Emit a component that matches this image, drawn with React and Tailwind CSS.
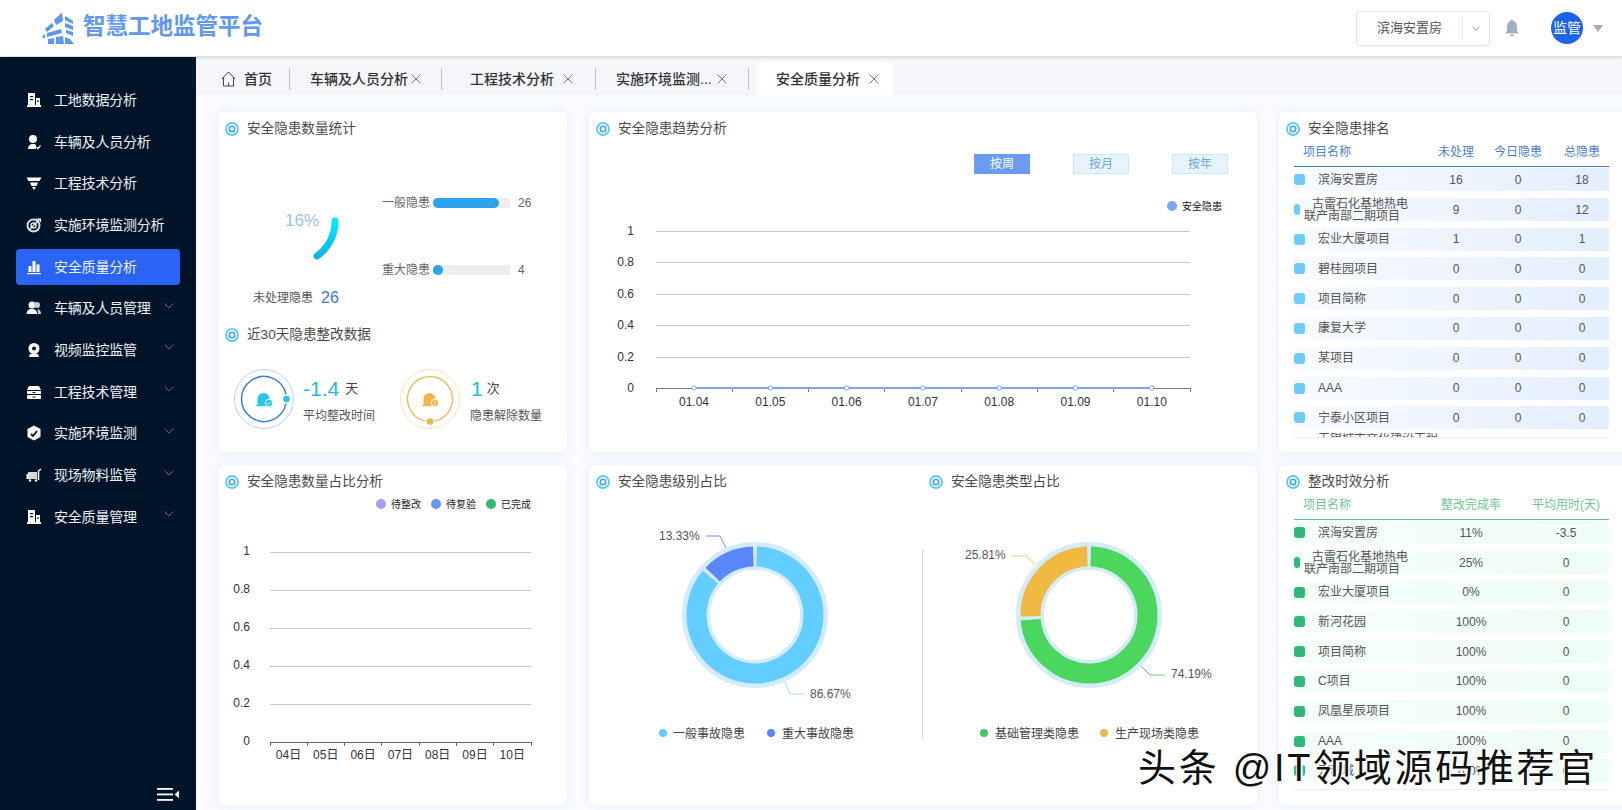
import React from 'react'

const navItems = [
  { label: '工地数据分析', icon: 'building' },
  { label: '车辆及人员分析', icon: 'person' },
  { label: '工程技术分析', icon: 'funnel' },
  { label: '实施环境监测分析', icon: 'target' },
  { label: '安全质量分析', icon: 'bars', active: true },
  { label: '车辆及人员管理', icon: 'people', more: true },
  { label: '视频监控监管', icon: 'camera', more: true },
  { label: '工程技术管理', icon: 'drawer', more: true },
  { label: '实施环境监测', icon: 'shield', more: true },
  { label: '现场物料监管', icon: 'cart', more: true },
  { label: '安全质量管理', icon: 'building', more: true },
]

const rankRows = [
  ['滨海安置房', 16, 0, 18],
  ['古雷石化基地热电联产南部二期项目', 9, 0, 12, true],
  ['宏业大厦项目', 1, 0, 1],
  ['碧桂园项目', 0, 0, 0],
  ['项目简称', 0, 0, 0],
  ['康复大学', 0, 0, 0],
  ['某项目', 0, 0, 0],
  ['AAA', 0, 0, 0],
  ['宁泰小区项目', 0, 0, 0],
]

const effectRows = [
  ['滨海安置房', '11%', '-3.5'],
  ['古雷石化基地热电联产南部二期项目', '25%', '0', true],
  ['宏业大厦项目', '0%', '0'],
  ['新河花园', '100%', '0'],
  ['项目简称', '100%', '0'],
  ['C项目', '100%', '0'],
  ['凤凰星辰项目', '100%', '0'],
  ['AAA', '100%', '0'],
  ['万科城', '100%', '0'],
]

function polar(cx, cy, r, deg) {
  const a = ((deg - 90) * Math.PI) / 180
  return [cx + r * Math.cos(a), cy + r * Math.sin(a)]
}

function arc(cx, cy, r, from, to) {
  const [x1, y1] = polar(cx, cy, r, from)
  const [x2, y2] = polar(cx, cy, r, to)
  const large = to - from > 180 ? 1 : 0
  return `M${x1} ${y1}A${r} ${r} 0 ${large} 1 ${x2} ${y2}`
}

function NavIcon({ name }) {
  const dark = '#001429'
  return (
    <svg width="16" height="16" viewBox="0 0 16 16" fill="#fff" className="shrink-0">
      {name === 'building' && (
        <>
          <rect x="2" y="1" width="7" height="12" />
          <rect x="10" y="6" width="4" height="7" />
          <rect x="1" y="13" width="14" height="2" />
          <rect x="4" y="4" width="3" height="1.2" fill={dark} />
          <rect x="4" y="7" width="3" height="1.2" fill={dark} />
          <rect x="11" y="8.5" width="2" height="1.2" fill={dark} />
        </>
      )}
      {name === 'person' && (
        <>
          <circle cx="7" cy="5" r="4" />
          <path d="M2 15c0-3 2-5 5-5 1.500 0 2.500.5 3 1v4z" />
          <path d="M10.500 13l1.500 1.500 2.500-3" fill="none" stroke="#fff" strokeWidth="1.200" />
        </>
      )}
      {name === 'funnel' && (
        <>
          <polygon points="0.500,2.500 15.500,2.500 13.500,6 2.500,6" />
          <polygon points="4,7.500 12,7.500 10.500,11 5.500,11" />
          <polygon points="6,12 10,12 8,15" />
        </>
      )}
      {name === 'target' && (
        <>
          <circle cx="7.500" cy="8.500" r="6" fill="none" stroke="#d8dde3" strokeWidth="2" />
          <circle cx="7.500" cy="8.500" r="2.500" fill="none" stroke="#d8dde3" strokeWidth="1.500" />
          <path d="M3 13L14 2M10 2h4.500v3" fill="none" stroke="#fff" strokeWidth="1.200" />
        </>
      )}
      {name === 'bars' && (
        <>
          <rect x="2.500" y="7" width="3" height="6" />
          <rect x="6.500" y="2" width="3" height="11" />
          <rect x="10.500" y="5.500" width="3" height="7.500" />
          <rect x="1" y="14" width="14" height="1.200" />
        </>
      )}
      {name === 'people' && (
        <>
          <circle cx="6" cy="5" r="3.500" />
          <path d="M0.500 14c0-3 2-5 5.500-5s5 2 5 5z" />
          <circle cx="11" cy="5" r="3" fill="#c8ced6" />
          <path d="M11.500 9c2 .3 3.500 2 3.500 5h-3z" fill="#c8ced6" />
        </>
      )}
      {name === 'camera' && (
        <>
          <circle cx="8" cy="6.500" r="5.500" />
          <circle cx="8" cy="6.500" r="2" fill={dark} />
          <path d="M4 12h8l1 3H3z" />
        </>
      )}
      {name === 'drawer' && (
        <>
          <path d="M3 2h10l2 4H1z" />
          <rect x="1" y="7" width="14" height="3" />
          <rect x="1" y="11" width="14" height="4" rx="1" />
          <rect x="6.500" y="8" width="3" height="1" fill={dark} />
          <rect x="6.500" y="12.500" width="3" height="1" fill={dark} />
        </>
      )}
      {name === 'shield' && (
        <>
          <polygon points="8,0.500 14.500,4 14.500,12 8,15.500 1.500,12 1.500,4" />
          <path d="M5 9l2 2 4-5" fill="none" stroke={dark} strokeWidth="1.800" />
        </>
      )}
      {name === 'cart' && (
        <>
          <rect x="2" y="5" width="9" height="7" fill="#d4d9df" />
          <rect x="0.500" y="7" width="2" height="5" />
          <path d="M12.500 13V4l2.500-2" fill="none" stroke="#fff" strokeWidth="1.500" />
          <circle cx="4" cy="13.500" r="1.200" />
          <circle cx="10" cy="13.500" r="1.200" />
        </>
      )}
    </svg>
  )
}

function TitleIcon() {
  return (
    <svg width="14" height="14" viewBox="0 0 14 14" className="shrink-0">
      <circle cx="7" cy="7" r="6" fill="none" stroke="#5ccbef" strokeWidth="1.800" />
      <circle cx="7" cy="7" r="2.700" fill="none" stroke="#3fa2e4" strokeWidth="1.600" />
    </svg>
  )
}

function CardTitle({ text, className }) {
  return (
    <div className={'h-[34px] flex items-center gap-2 pl-[7px] text-[13.6px] text-[#4a4a4a] ' + (className || '')}>
      <TitleIcon />
      <span>{text}</span>
    </div>
  )
}

function Close() {
  return (
    <svg width="10" height="10" viewBox="0 0 10 10" className="shrink-0">
      <path d="M0.500 0.500l9 9M9.500 0.500l-9 9" stroke="#666" strokeWidth="0.900" />
    </svg>
  )
}

function Tabs() {
  return (
    <div className="h-[38px] bg-[#f5f6fa] flex items-end shrink-0 text-sm font-medium text-[#333]">
      <div className="w-[94px] h-[33px] flex items-center">
        <div className="w-full h-[22px] border-r border-[#b9bec5] flex items-center pl-[25px] gap-2">
          <svg width="15" height="16" viewBox="0 0 15 16" fill="none" stroke="#444" strokeWidth="1">
            <path d="M0.800 8L7.500 1l6.700 7M2.500 6.500V15h10V6.500M7.500 11.500V15" />
          </svg>
          <span>首页</span>
        </div>
      </div>
      <div className="w-[152px] h-[33px] flex items-center">
        <div className="w-full h-[22px] border-r border-[#b9bec5] flex items-center pl-[20px] gap-[3px]">
          <span>车辆及人员分析</span>
          <Close />
        </div>
      </div>
      <div className="w-[154px] h-[33px] flex items-center">
        <div className="w-full h-[22px] border-r border-[#b9bec5] flex items-center pl-[28px] gap-[9px]">
          <span>工程技术分析</span>
          <Close />
        </div>
      </div>
      <div className="w-[153px] h-[33px] flex items-center">
        <div className="w-full h-[22px] border-r border-[#b9bec5] flex items-center pl-[20px] gap-[5px]">
          <span>实施环境监测...</span>
          <Close />
        </div>
      </div>
      <div className="ml-[7px] w-[137px] h-[33px] bg-white rounded-t-md flex items-center pl-[20px] gap-[9px]">
        <span>安全质量分析</span>
        <Close />
      </div>
    </div>
  )
}

function Header() {
  return (
    <div className="h-[57px] shrink-0 bg-white border-b border-[#dcdfe4] flex items-center pl-[42px] pr-[19px] relative z-10 shadow-[0_1px_3px_rgba(0,0,0,0.12)]">
      <svg width="33" height="33" viewBox="0 0 33 33" fill="#5b97ee" className="shrink-0">
        <polygon points="12,8 20,0.500 21,9 14,13" />
        <polygon points="3,17 10,11 12,14 5,20" />
        <polygon points="23,4 31,9 31,12 23,8" />
        <polygon points="23,11 31,14 31,18 23,15" />
        <polygon points="24,18 31,20 31,24 24,21" />
        <polygon points="5,21 19,17 20,21 5,25" />
        <polygon points="6,27 12,26 12,32 6,32" />
        <polygon points="14,25 21,24 22,32 14,32" />
        <polygon points="23,25 28,27 32,32 23,32" />
        <polygon points="0.500,24 3,22 3,26 0.500,26" />
      </svg>
      <div className="ml-2 text-[22.5px] font-bold text-[#5f98ec] leading-none -mt-[2px]">智慧工地监管平台</div>
      <div className="ml-auto w-[134px] h-[35px] border border-[#dfe3e8] rounded flex items-center text-xs text-[#555] shadow-[0_1px_2px_rgba(0,0,0,0.05)]">
        <span className="pl-5 text-[13px]">滨海安置房</span>
        <span className="ml-auto h-[22px] border-l border-[#e6e8eb]" />
        <svg width="8" height="5" viewBox="0 0 8 5" className="mx-[9px]">
          <path d="M0.500 0.500L4 4.500l3.500-4" fill="none" stroke="#888" strokeWidth="0.800" />
        </svg>
      </div>
      <svg width="16" height="18" viewBox="0 0 16 18" fill="#a3afbf" className="ml-[14px]">
        <path d="M8 0.500a1.300 1.300 0 0 1 1.300 1.500C11.800 2.700 13 5 13 7.500V12l2 2.500H1L3 12V7.500C3 5 4.200 2.700 6.700 2A1.300 1.300 0 0 1 8 0.500z" />
        <path d="M6 15.500h4a2 2 0 0 1-4 0z" />
      </svg>
      <div className="ml-[31px] w-8 h-8 rounded-full bg-[#1e63e9] text-white text-sm flex items-center justify-center">监管</div>
      <svg width="10" height="7" viewBox="0 0 10 7" fill="#a6aeb8" className="ml-[10px]">
        <polygon points="0,0 10,0 5,7" />
      </svg>
    </div>
  )
}

function Sidebar() {
  return (
    <div className="w-[196px] shrink-0 bg-[#001429] flex flex-col pt-[22px]">
      {navItems.map((item) => (
        <div key={item.label} className="h-[41.7px] flex items-center px-4 shrink-0">
          <div className={'w-full h-9 rounded flex items-center pl-[10px] pr-[6px] gap-3 text-[#eef1f5] ' + (item.active ? 'bg-[#2a64f6]' : '')}>
            <NavIcon name={item.icon} />
            <span className="whitespace-nowrap text-sm tracking-[-0.2px]">{item.label}</span>
            {item.more && (
              <svg width="10" height="6" viewBox="0 0 10 6" className="ml-auto -mt-[5px] shrink-0">
                <path d="M0.500 0.500L5 5l4.500-4.500" fill="none" stroke="#5d6c80" strokeWidth="0.900" />
              </svg>
            )}
          </div>
        </div>
      ))}
      <div className="mt-auto flex justify-end pr-[17px] pb-[9px]">
        <svg width="22" height="13" viewBox="0 0 22 13" fill="#fff">
          <rect x="0" y="0" width="16" height="1.800" />
          <rect x="0" y="5.500" width="16" height="1.800" />
          <rect x="0" y="11" width="16" height="1.800" />
          <polygon points="22,2.500 22,10 17.500,6.400" />
        </svg>
      </div>
    </div>
  )
}

function Bar({ label, value, fillClass }) {
  return (
    <div className="h-5 flex items-center text-xs text-[#666]">
      <span className="w-[51px]">{label}</span>
      <div className="w-[77px] h-[10px] bg-[#eeeeee]">
        <div className={'h-full rounded-full bg-[#2ba3ef] ' + fillClass} />
      </div>
      <span className="ml-2 text-[#666]">{value}</span>
    </div>
  )
}

function Gauge({ color, soft, fill, dotAngle, mark }) {
  const [dx, dy] = polar(31, 31, 22.5, dotAngle)
  return (
    <svg width="62" height="62" viewBox="0 0 62 62" className="shrink-0">
      <circle cx="31" cy="31" r="29.500" fill="none" stroke={soft} strokeWidth="1" />
      <path d={arc(31, 31, 22.5, dotAngle + 12, dotAngle + 348)} fill="none" stroke={color} strokeWidth="1.500" />
      <circle cx={dx} cy={dy} r="3.300" fill={fill} />
      <path d="M24.500 37v-6a6 6 0 0 1 12 0v6z" fill={fill} />
      <rect x="23" y="37" width="14" height="1.200" fill={fill} />
      <circle cx="36" cy="35" r="3.800" fill={fill} stroke="#fff" strokeWidth="1" />
      {mark === 'check' ? (
        <path d="M34 35l1.500 1.500 2.500-3" fill="none" stroke="#fff" strokeWidth="0.900" />
      ) : (
        <path d="M36 33v2.500M36 36.500v0.800" fill="none" stroke="#fff" strokeWidth="0.900" />
      )}
    </svg>
  )
}

function StatsCard() {
  return (
    <div className="bg-white rounded-md shadow-[0_0_8px_rgba(205,222,250,0.55)] overflow-hidden">
      <CardTitle text="安全隐患数量统计" />
      <div className="h-[142px] flex">
        <svg width="164" height="142" viewBox="0 0 164 142" className="shrink-0">
          <defs>
            <linearGradient id="ringGrad" x1="0" y1="0" x2="0" y2="1">
              <stop offset="0" stopColor="#00eaf8" />
              <stop offset="1" stopColor="#09b4ee" />
            </linearGradient>
          </defs>
          <text x="67" y="80" fontSize="17" fontWeight="300" fill="#9dbfe0">16%</text>
          <path d="M117 75A42 42 0 0 1 99 110" fill="none" stroke="url(#ringGrad)" strokeWidth="7" strokeLinecap="round" />
        </svg>
        <div className="flex flex-col">
          <div className="mt-[47px]"><Bar label="一般隐患" value="26" fillClass="w-[66px]" /></div>
          <div className="mt-[47px]"><Bar label="重大隐患" value="4" fillClass="w-[10px]" /></div>
        </div>
      </div>
      <div className="h-5 flex items-center pl-[35px] gap-2 text-xs text-[#555]">
        <span>未处理隐患</span>
        <span className="text-base text-[#3f78c4]">26</span>
      </div>
      <CardTitle text="近30天隐患整改数据" className="mt-[10px]" />
      <div className="flex pl-[15px] mt-[16px]">
        <div className="w-[166px] flex items-center gap-2">
          <Gauge color="#3f7fc4" soft="#bcd6ee" fill="#22c6ee" dotAngle={90} mark="check" />
          <div className="flex flex-col">
            <div className="h-[26px] mt-[1px] flex items-center gap-[6px] text-[#29b6e6] text-[21px] leading-none">
              -1.4<span className="text-[13px] text-[#444]">天</span>
            </div>
            <span className="mt-[6px] text-xs text-[#555]">平均整改时间</span>
          </div>
        </div>
        <div className="flex items-center gap-[11px]">
          <Gauge color="#e8bf62" soft="#f6e6c6" fill="#efb550" dotAngle={180} mark="info" />
          <div className="flex flex-col">
            <div className="h-[26px] mt-[1px] -ml-[1px] flex items-center gap-[4px] text-[#29b6e6] text-[21px] leading-none">
              1<span className="text-[13px] text-[#444]">次</span>
            </div>
            <span className="mt-[6px] -ml-[2px] text-xs text-[#555]">隐患解除数量</span>
          </div>
        </div>
      </div>
    </div>
  )
}

function TrendCard() {
  const ys = [57, 88, 120, 151, 183]
  const labels = ['1', '0.8', '0.6', '0.4', '0.2']
  const cats = ['01.04', '01.05', '01.06', '01.07', '01.08', '01.09', '01.10']
  return (
    <div className="bg-white rounded-md shadow-[0_0_8px_rgba(205,222,250,0.55)] overflow-hidden">
      <CardTitle text="安全隐患趋势分析" />
      <div className="mt-2 flex justify-end gap-[43px] pr-[29px] text-xs">
        <div className="w-14 h-5 bg-[#6b9cf0] text-white flex items-center justify-center">按周</div>
        <div className="w-14 h-5 bg-[#e7f3fd] border border-[#cfe5f6] text-[#6fa8dc] flex items-center justify-center">按月</div>
        <div className="w-14 h-5 bg-[#e7f3fd] border border-[#cfe5f6] text-[#6fa8dc] flex items-center justify-center">按年</div>
      </div>
      <svg width="668" height="278" viewBox="0 0 668 278" className="block">
        <circle cx="583" cy="32" r="5" fill="#7ba7ee" />
        <text x="593" y="36" fontSize="10" fill="#111">安全隐患</text>
        {ys.map((y, i) => (
          <g key={y}>
            <line x1="67" x2="601" y1={y} y2={y} stroke="#c8c8c8" shapeRendering="crispEdges" />
            <text x="45" y={y + 4} fontSize="12" fill="#333" textAnchor="end">{labels[i]}</text>
          </g>
        ))}
        <text x="45" y="218" fontSize="12" fill="#333" textAnchor="end">0</text>
        <line x1="67" x2="601" y1="214" y2="214" stroke="#777" shapeRendering="crispEdges" />
        {[0, 1, 2, 3, 4, 5, 6, 7].map((i) => (
          <line key={i} x1={67 + i * 76.3} x2={67 + i * 76.3} y1="214" y2="218" stroke="#777" shapeRendering="crispEdges" />
        ))}
        <line x1="105" x2="563" y1="214" y2="214" stroke="#7ba7ee" strokeWidth="2" />
        {cats.map((c, i) => (
          <g key={c}>
            <circle cx={105 + i * 76.3} cy="214" r="2.200" fill="#fff" stroke="#7ba7ee" />
            <text x={105 + i * 76.3} y="232" fontSize="12" fill="#333" textAnchor="middle">{c}</text>
          </g>
        ))}
      </svg>
    </div>
  )
}

function ShareCard() {
  const ys = [53, 91, 129, 167, 205]
  const labels = ['1', '0.8', '0.6', '0.4', '0.2']
  const days = ['04日', '05日', '06日', '07日', '08日', '09日', '10日']
  return (
    <div className="bg-white rounded-md shadow-[0_0_8px_rgba(205,222,250,0.55)] overflow-hidden">
      <CardTitle text="安全隐患数量占比分析" />
      <svg width="349" height="306" viewBox="0 0 349 306" className="block">
        <circle cx="163" cy="5" r="5" fill="#a79df5" />
        <text x="173" y="9" fontSize="10" fill="#222">待整改</text>
        <circle cx="218" cy="5" r="5" fill="#6598f0" />
        <text x="228" y="9" fontSize="10" fill="#222">待复验</text>
        <circle cx="273" cy="5" r="5" fill="#2fb878" />
        <text x="283" y="9" fontSize="10" fill="#222">已完成</text>
        {ys.map((y, i) => (
          <g key={y}>
            <line x1="52" x2="313" y1={y} y2={y} stroke="#c8c8c8" shapeRendering="crispEdges" />
            <text x="32" y={y + 3} fontSize="12" fill="#333" textAnchor="end">{labels[i]}</text>
          </g>
        ))}
        <text x="32" y="246" fontSize="12" fill="#333" textAnchor="end">0</text>
        <line x1="52" x2="313" y1="243" y2="243" stroke="#666" shapeRendering="crispEdges" />
        {[0, 1, 2, 3, 4, 5, 6, 7].map((i) => (
          <line key={i} x1={52 + i * 37.3} x2={52 + i * 37.3} y1="243" y2="247" stroke="#666" shapeRendering="crispEdges" />
        ))}
        {days.map((d, i) => (
          <text key={d} x={70.500 + i * 37.3} y="260" fontSize="12" fill="#333" textAnchor="middle">{d}</text>
        ))}
      </svg>
    </div>
  )
}

function Donut({ cx, cy, first, colorA, colorB }) {
  const split = first * 3.6
  return (
    <g fill="none">
      <circle cx={cx} cy={cy} r="59" stroke="#d4ebfb" strokeWidth="28" />
      <path d={arc(cx, cy, 58.5, 1.7, split - 1.7)} stroke={colorA} strokeWidth="20" />
      <path d={arc(cx, cy, 58.5, split + 1.7, 358.3)} stroke={colorB} strokeWidth="20" />
    </g>
  )
}

function LevelCard() {
  return (
    <div className="bg-white rounded-md shadow-[0_0_8px_rgba(205,222,250,0.55)] overflow-hidden">
      <div className="flex">
        <CardTitle text="安全隐患级别占比" className="w-[333px]" />
        <CardTitle text="安全隐患类型占比" />
      </div>
      <svg width="668" height="306" viewBox="0 0 668 306" className="block">
        <Donut cx={166} cy={116} first={86.67} colorA="#62cdff" colorB="#5b87fb" />
        <Donut cx={500} cy={116} first={74.19} colorA="#4bd65d" colorB="#efb942" />
        <polyline points="117,37 131,37 137,49" fill="none" stroke="#6b8cf0" />
        <text x="70" y="41" fontSize="12" fill="#555">13.33%</text>
        <polyline points="196,183 201,195 216,195" fill="none" stroke="#a9dcf0" />
        <text x="221" y="199" fontSize="12" fill="#555">86.67%</text>
        <polyline points="423,57 437,57 446,65" fill="none" stroke="#e6c777" />
        <text x="376" y="60" fontSize="12" fill="#555">25.81%</text>
        <polyline points="552,167 561,176 576,176" fill="none" stroke="#6ccb78" />
        <text x="582" y="179" fontSize="12" fill="#555">74.19%</text>
        <line x1="333" x2="333" y1="51" y2="240" stroke="#c9d8e6" shapeRendering="crispEdges" />
        <circle cx="74" cy="234" r="4" fill="#62cdff" />
        <text x="84" y="239" fontSize="12" fill="#444">一般事故隐患</text>
        <circle cx="182" cy="234" r="4" fill="#5b87fb" />
        <text x="193" y="239" fontSize="12" fill="#444">重大事故隐患</text>
        <circle cx="395" cy="234" r="4" fill="#3fc95a" />
        <text x="406" y="239" fontSize="12" fill="#444">基础管理类隐患</text>
        <circle cx="515" cy="234" r="4" fill="#e8b84c" />
        <text x="526" y="239" fontSize="12" fill="#444">生产现场类隐患</text>
      </svg>
    </div>
  )
}

function NameCell({ name, wrap, marker }) {
  return (
    <div className="flex items-center min-w-0">
      <span className={'h-[11px] rounded-[3px] shrink-0 ' + marker + (wrap ? ' w-[6px]' : ' w-[11px]')} />
      {wrap ? (
        <span className="ml-[4px] w-[105px] text-[12px] leading-[12px] indent-[8px]">{name}</span>
      ) : (
        <span className="ml-[13px] whitespace-nowrap">{name}</span>
      )}
    </div>
  )
}

function RankCard() {
  return (
    <div className="bg-white rounded-md shadow-[0_0_8px_rgba(205,222,250,0.55)] overflow-hidden">
      <CardTitle text="安全隐患排名" />
      <div className="pl-[15px] w-[330px] text-xs">
        <div className="h-[23px] -mt-[2px] mb-[1px] grid grid-cols-[137px_50px_74px_54px] text-[#4f7fc9] border-b border-[#4a7ab5] pb-[6px] items-center">
          <span className="pl-[9px]">项目名称</span>
          <span className="text-center">未处理</span>
          <span className="text-center">今日隐患</span>
          <span className="text-center">总隐患</span>
        </div>
        <div className="flex flex-col gap-[6.8px] text-[#555]">
          {rankRows.map((r) => (
            <div key={r[0]} className="h-[23px] grid grid-cols-[137px_50px_74px_54px] items-center bg-linear-to-r from-[#f8fbff] to-[#e3eefe]">
              <NameCell name={r[0]} wrap={r[4]} marker="bg-[#6fcbfa]" />
              <span className="text-center">{r[1]}</span>
              <span className="text-center">{r[2]}</span>
              <span className="text-center">{r[3]}</span>
            </div>
          ))}
        </div>
        <div className="mt-[4px] h-[4px] overflow-hidden leading-[12px] pl-[24px] text-[#555] border-b border-[#eaeef3] box-content">无锡城市文化建设工程</div>
      </div>
    </div>
  )
}

function EffectCard() {
  return (
    <div className="bg-white rounded-md shadow-[0_0_8px_rgba(205,222,250,0.55)] overflow-hidden">
      <CardTitle text="整改时效分析" />
      <div className="pl-[15px] w-[330px] text-xs">
        <div className="h-[23px] -mt-[2px] mb-[1px] grid grid-cols-[137px_80px_98px] text-[#6fc78f] border-b border-[#60c090] pb-[6px] items-center">
          <span className="pl-[9px]">项目名称</span>
          <span className="text-center">整改完成率</span>
          <span className="text-center pl-3">平均用时(天)</span>
        </div>
        <div className="flex flex-col gap-[6.8px] text-[#555] border-b border-[#eaeef3] pb-[7px]">
          {effectRows.map((r) => (
            <div key={r[0]} className="h-[23px] grid grid-cols-[137px_80px_98px] items-center bg-linear-to-r from-[#f5fffa] to-[#eefdf6]">
              <NameCell name={r[0]} wrap={r[3]} marker="bg-[#2fb878]" />
              <span className="text-center">{r[1]}</span>
              <span className="text-center pl-3">{r[2]}</span>
            </div>
          ))}
        </div>
      </div>
    </div>
  )
}

export default function App() {
  return (
    <div className="h-screen w-full overflow-hidden flex flex-col bg-white relative font-['Liberation_Sans','Noto_Sans_CJK_SC',sans-serif]">
      <Header />
      <div className="flex-1 flex min-h-0">
        <Sidebar />
        <div className="flex-1 flex flex-col min-w-0 overflow-hidden">
          <Tabs />
          <div className="flex-1 bg-[#f9fbff] pl-[22px] pt-[17px]">
            <div className="grid grid-cols-[349px_668px_350px] grid-rows-[340px_340px] gap-x-[22px] gap-y-[13px]">
              <StatsCard />
              <TrendCard />
              <RankCard />
              <ShareCard />
              <LevelCard />
              <EffectCard />
            </div>
          </div>
        </div>
      </div>
      <div className="absolute left-[1138px] top-[746px] whitespace-nowrap text-[38px] leading-[44px] text-[#111] tracking-[2.7px] [text-shadow:1px_1px_0_#fff,-1px_-1px_0_#fff,2px_2px_1px_#fff]">
        头条 @IT领域源码推荐官
      </div>
    </div>
  )
}
